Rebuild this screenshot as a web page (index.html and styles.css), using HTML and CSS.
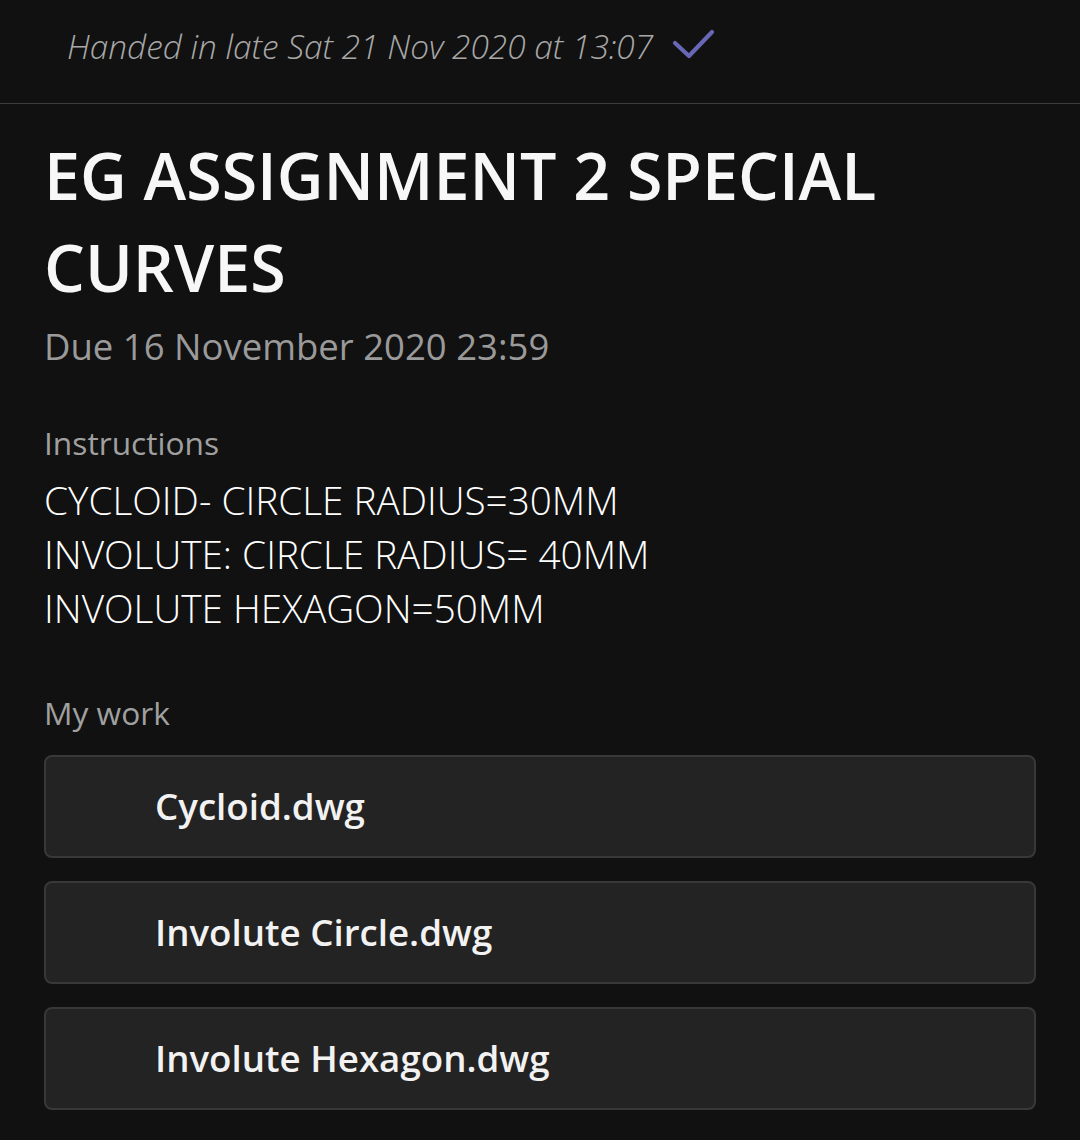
FILE: index.html
```html
<!DOCTYPE html>
<html>
<head>
<meta charset="utf-8">
<link rel="stylesheet" href="styles.css">
</head>
<body>
<header class="status">
  <span class="status-text">Handed in late Sat 21 Nov 2020 at 13:07</span>
  <svg class="check" width="44" height="34" viewBox="0 0 44 34"><path d="M4 15 L18 28 L41 4" fill="none" stroke="#6767b5" stroke-width="4.2" stroke-linecap="round" stroke-linejoin="round"/></svg>
</header>
<main class="content">
  <h1 class="title">EG ASSIGNMENT 2 SPECIAL CURVES</h1>
  <div class="due">Due 16 November 2020 23:59</div>
  <section class="section">
    <div class="label">Instructions</div>
    <div class="instructions">
      <div>CYCLOID- CIRCLE RADIUS=30MM</div>
      <div>INVOLUTE: CIRCLE RADIUS= 40MM</div>
      <div>INVOLUTE HEXAGON=50MM</div>
    </div>
  </section>
  <section class="section work">
    <div class="label">My work</div>
    <div class="files">
      <div class="file">Cycloid.dwg</div>
      <div class="file">Involute Circle.dwg</div>
      <div class="file">Involute Hexagon.dwg</div>
    </div>
  </section>
</main>
</body>
</html>
```
FILE: styles.css
```css
html, body {
  margin: 0;
  padding: 0;
  background: #111111;
  font-family: "Open Sans", "Noto Sans", sans-serif;
  color: #f5f5f5;
}
.status {
  height: 104px;
  box-sizing: border-box;
  border-bottom: 1px solid #3d3d3d;
  display: flex;
  align-items: center;
  padding-left: 67px;
  padding-bottom: 12px;
  gap: 18px;
}
.status-text {
  font-style: italic;
  font-weight: 300;
  font-size: 33.4px;
  color: #a8a8a8;
}
.check { display: block; margin-top: -2px; }
.content {
  padding: 0 44px 0 44px;
}
.title {
  margin: 0;
  padding-top: 25px;
  font-weight: 600;
  font-size: 64.5px;
  line-height: 92px;
  color: #f7f7f7;
}
.due {
  font-size: 36.5px;
  font-weight: 400;
  color: #9a9a9a;
  line-height: 44px;
  margin-top: 11px;
}
.section { margin-top: 55px; }
.label {
  font-size: 31.7px;
  color: #a0a0a0;
  line-height: 40px;
}
.instructions {
  margin-top: 10px;
  font-size: 38.7px;
  font-weight: 300;
  line-height: 54px;
  color: #ffffff;
}
.work { margin-top: 58px; }
.files {
  margin-top: 22px;
  display: flex;
  flex-direction: column;
  gap: 23px;
  width: 992px;
}
.file {
  height: 103px;
  box-sizing: border-box;
  background: #232323;
  border: 2px solid #383838;
  border-radius: 8px;
  display: flex;
  align-items: center;
  padding-left: 109px;
  padding-bottom: 2px;
  font-size: 36.7px;
  font-weight: 600;
  color: #f2f2f2;
}
```
